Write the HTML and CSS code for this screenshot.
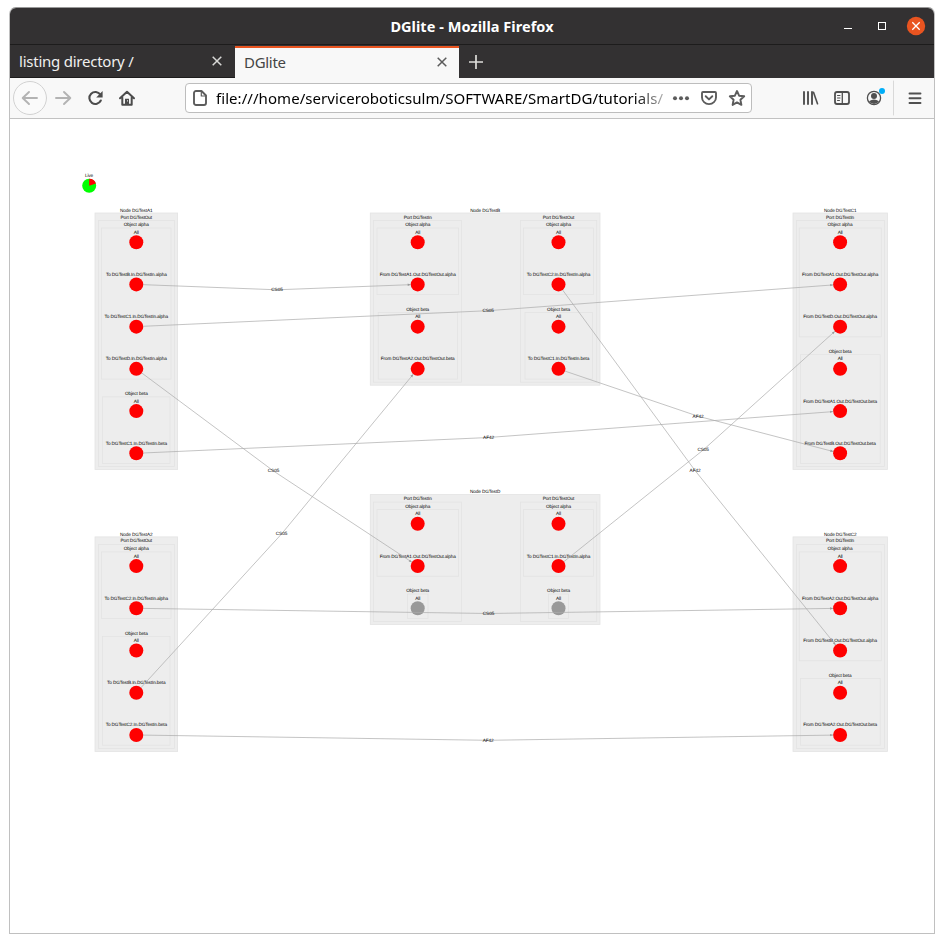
FILE: index.html
```html
<!DOCTYPE html>
<html lang="en">
<head>
<meta charset="utf-8">
<title>DGlite</title>
<link rel="stylesheet" href="styles.css">
</head>
<body>
<div class="window">
  <header class="titlebar">
    <span class="title">DGlite - Mozilla Firefox</span>
    <div class="controls">
      <svg width="82" height="20" viewBox="844 16 82 20">
        <path d="M844 28.5h8" stroke="#fff"/>
        <rect x="878.5" y="22.5" width="7" height="7" fill="none" stroke="#fff"/>
        <circle cx="916" cy="26" r="9.2" fill="#e95420"/>
        <path d="M912.3 22.3l7.4 7.4m0-7.4l-7.4 7.4" stroke="#fff" stroke-width="1.3"/>
      </svg>
    </div>
  </header>
  <nav class="tabs">
    <div class="tab"><span class="tab-one">listing directory /</span>
      <svg width="10" height="10" viewBox="0 0 10 10"><path d="M.7.7l8.6 8.6m0-8.6L.7 9.3" stroke="#d8d8d6" stroke-width="1.5"/></svg>
    </div>
    <div class="tab active"><span class="tab-two">DGlite</span>
      <svg width="10" height="10" viewBox="0 0 10 10"><path d="M.7.7l8.6 8.6m0-8.6L.7 9.3" stroke="#5b5b5b" stroke-width="1.5"/></svg>
    </div>
    <svg class="plus" width="14" height="14" viewBox="0 0 14 14"><path d="M7 0v14M0 7h14" stroke="#deddda" stroke-width="1.7"/></svg>
  </nav>
  <div class="toolbar">
    <svg class="nav-icons" width="130" height="40" viewBox="10 78 130 40" fill="none" stroke-linecap="round" stroke-linejoin="round">
      <circle cx="30" cy="98" r="16.5" fill="#fafafa" stroke="#d2d2d2"/>
      <path d="M37 98H23m6-6l-6.300 6 6.300 6" stroke="#b3b3b3" stroke-width="1.900"/>
      <path d="M56 98h14m-6-6l6.300 6-6.300 6" stroke="#b3b3b3" stroke-width="1.900"/>
      <path d="M100.300 94.500a6 6 0 1 0 .5 6" stroke="#4c4c4c" stroke-width="2.100"/>
      <path d="M102.600 91v6.400h-6.400z" fill="#4c4c4c"/>
      <path d="M120 98.300l7-6.600 7 6.600M122.300 97.500v7.200h9.400v-7.200" stroke="#4c4c4c" stroke-width="2"/>
      <path d="M125 103.900v-5.200h4v5.200z" fill="#4c4c4c"/><path d="M127.500 100.600v.5" stroke="#fff" stroke-width=".8"/>
    </svg>
    <div class="urlbar">
      <svg width="14" height="16" viewBox="0 0 14 16" fill="none" stroke="#5c5c5c" stroke-width="1.900" stroke-linejoin="round"><path d="M3 1h5.500L13 5.500V13a2 2 0 0 1-2 2H3a2 2 0 0 1-2-2V3a2 2 0 0 1 2-2z"/><path d="M8.300 1v5H13" stroke-width="1.200"/></svg>
      <span class="url">file:///home/serviceroboticsulm/SOFTWARE/SmartDG/tutorials/</span>
      <svg class="url-icons" width="74" height="18" viewBox="672 89 74 18" fill="none" stroke="#5c5c5c" stroke-width="1.900" stroke-linejoin="round" stroke-linecap="round">
        <g fill="#5c5c5c" stroke="none"><circle cx="675" cy="98.300" r="2"/><circle cx="681" cy="98.300" r="2"/><circle cx="687" cy="98.300" r="2"/></g>
        <path d="M703 92h12a1 1 0 0 1 1 1v4.500a7 6.600 0 0 1-14 0V93a1 1 0 0 1 1-1z"/><path d="M705.700 96.200l3.300 3.200 3.300-3.200"/>
        <path d="M737 91l2.100 4.700 5.100.6-3.800 3.500 1 5.100-4.400-2.500-4.400 2.500 1-5.100-3.800-3.500 5.100-.6z"/>
      </svg>
    </div>
    <svg class="menu-icons" width="130" height="40" viewBox="796 78 130 40" fill="none" stroke="#505050" stroke-width="1.800" stroke-linecap="round">
      <path d="M804 92v12M808 92v12M812 92v12" stroke-width="1.900"/><path d="M813.500 92.300l4 11.500" stroke-width="1.600"/>
      <rect x="835" y="92" width="14" height="12" rx="2"/><path d="M842.300 92v12" stroke-width="1.300"/><path d="M837.500 95.500h2.500M837.500 98h2.500M837.500 100.500h2" stroke-width="1"/>
      <circle cx="874" cy="98" r="6.600" stroke-width="1.300"/><circle cx="874" cy="96" r="3" fill="#505050" stroke="none"/><path d="M869 101.200q5-3.200 10 0-1.600 2.700-5 2.700t-5-2.700z" fill="#505050" stroke="none"/>
      <circle cx="882" cy="91" r="3" fill="#00aef8" stroke="none"/>
      <path d="M893.500 81v34" stroke="#d9d9d9" stroke-width="1"/>
      <path d="M909.500 93.500h11M909.500 98.300h11M909.500 103h11" stroke-width="1.900"/>
    </svg>
  </div>
  <main class="page">
    <svg id="graph" width="924" height="814" viewBox="10 119 924 814"></svg>
  </main>
</div>
<script src="graph.js"></script>
</body>
</html>
```
FILE: styles.css
```css
* { box-sizing: border-box; }
body {
  margin: 0;
  padding: 7px 9px;
  height: 943px;
  background: #fff;
  font-family: "Noto Sans", sans-serif;
  overflow: hidden;
}
.window {
  width: 926px;
  height: 927px;
  border: 1px solid #c0c0c0;
  border-top-color: #999;
  border-radius: 7px 7px 0 0;
  overflow: hidden;
  display: flex;
  flex-direction: column;
}
.titlebar {
  height: 37px;
  flex: none;
  display: grid;
  grid-template-columns: 1fr auto 1fr;
  align-items: center;
  background: #333132;
  border-bottom: 1px solid #1d1c1c;
  color: #fff;
}
.title {
  grid-column: 2;
  font-size: 14.500px;
  font-weight: 700;
  line-height: 20px;
  letter-spacing: 0.050px;
  white-space: nowrap;
}
.controls { justify-self: end; padding-right: 8px; height: 20px; }
svg { display: block; flex: none; }
.tabs {
  height: 33px;
  flex: none;
  display: flex;
  align-items: center;
  background: #333132;
}
.tab {
  height: 33px;
  width: 225px;
  padding: 0 13px 0 9px;
  display: flex;
  align-items: center;
  justify-content: space-between;
  color: #efefee;
  font-size: 15px;
  border-bottom: 1px solid #1d1c1c;
  white-space: nowrap;
}
.tab.active {
  width: 224px;
  margin-top: 1px;
  height: 32px;
  background: #f8f8f8;
  color: #454545;
  border-top: 2px solid #e95420;
  border-bottom: 0;
  padding: 0 12px 2px 9px;
}
.plus { margin-left: 10px; }
.tab-one { letter-spacing: -0.240px; }
.tab-two { letter-spacing: -0.300px; }
.toolbar {
  height: 41px;
  flex: none;
  display: flex;
  background: #f8f8f8;
  border-bottom: 1px solid #c2c2c2;
}
.urlbar {
  margin: 5px 44px 0 45px;
  width: 567px;
  height: 30px;
  padding: 0 5px 0 7px;
  display: flex;
  align-items: center;
  border: 1px solid #bdbdbd;
  border-radius: 4px;
  background: #fff;
}
.url {
  margin-left: 9px;
  width: 449px;
  flex: none;
  overflow: hidden;
  white-space: nowrap;
  font-size: 15px;
  letter-spacing: 0.060px;
  background: linear-gradient(90deg, #000 93%, #bbb 100%);
  background-clip: text;
  color: transparent;
}
.url-icons { margin-left: auto; }
.page { flex: 1; background: #fff; }
.box { fill: #ededed; stroke: #e3e3e3; stroke-width: .8; }
.edge { fill: none; stroke: #aaa; stroke-width: .7; }
.arrow { fill: #999; }
.on { fill: #f00; }
.off { fill: #999; }
.label {
  font-family: "Liberation Sans", sans-serif;
  font-size: 4.690px;
  letter-spacing: -0.110px;
  text-anchor: middle;
  text-rendering: geometricPrecision;
  fill: #000;
}
```
FILE: graph.js
```js
const COL = { left: 136.3, midIn: 417.7, midOut: 558.5, right: 840.1 };
const STEP = 42.22;
const parts = [];

const box = (x1, y1, x2, y2) =>
  parts.push(`<rect class="box" x="${x1}" y="${y1}" width="${x2 - x1}" height="${y2 - y1}"/>`);
const label = (x, y, text) =>
  parts.push(`<text class="label" x="${x}" y="${y + 1.5}">${text}</text>`);
const dot = (x, y, cls) =>
  parts.push(`<circle class="${cls}" cx="${x}" cy="${y}" r="7"/>`);

// objects: [name, x1, x2, first row, row labels, dot class]
function port(cx, top, bottom, x1, x2, name, objects) {
  box(x1, top + 7.5, x2, bottom - 3);
  label(cx, top + 4, 'Port ' + name);
  for (const [obj, ox1, ox2, row, rows, cls] of objects) {
    const y = top + 29.200 + row * STEP;
    box(ox1, y - 14.200, ox2, y + (rows.length - 1) * STEP + 10.200);
    label(cx, y - 17.300, 'Object ' + obj);
    rows.forEach((text, i) => {
      label(cx, y + i * STEP - 10, text);
      dot(cx, y + i * STEP, cls || 'on');
    });
  }
}

function node(name, x1, top, x2, bottom) {
  box(x1, top, x2, bottom);
  label((x1 + x2) / 2, top - 2.700, 'Node ' + name);
}

node('DGTestA1', 95, 213, 177.600, 469.500);
port(COL.left, 213, 469.500, 98.500, 174.500, 'DGTestOut', [
  ['alpha', 101.500, 171, 0, ['All', 'To DGTestB.In.DGTestIn.alpha', 'To DGTestC1.In.DGTestIn.alpha', 'To DGTestD.In.DGTestIn.alpha']],
  ['beta', 102.500, 170, 4, ['All', 'To DGTestC1.In.DGTestIn.beta']]
]);
node('DGTestB', 370.300, 213, 600, 385.200);
port(COL.midIn, 213, 385.200, 373.500, 461.500, 'DGTestIn', [
  ['alpha', 377, 458.600, 0, ['All', 'From DGTestA1.Out.DGTestOut.alpha']],
  ['beta', 378.300, 457.500, 2, ['All', 'From DGTestA2.Out.DGTestOut.beta']]
]);
port(COL.midOut, 213, 385.200, 520.500, 596.700, 'DGTestOut', [
  ['alpha', 523.600, 593.500, 0, ['All', 'To DGTestC2.In.DGTestIn.alpha']],
  ['beta', 525, 592.500, 2, ['All', 'To DGTestC1.In.DGTestIn.beta']]
]);
node('DGTestC1', 793, 213, 887.500, 469.500);
port(COL.right, 213, 469.500, 796.400, 884.500, 'DGTestIn', [
  ['alpha', 799.300, 881.300, 0, ['All', 'From DGTestA1.Out.DGTestOut.alpha', 'From DGTestD.Out.DGTestOut.alpha']],
  ['beta', 800.500, 880.200, 3, ['All', 'From DGTestA1.Out.DGTestOut.beta', 'From DGTestB.Out.DGTestOut.beta']]
]);
node('DGTestD', 370.300, 494.600, 600, 624.500);
port(COL.midIn, 494.600, 624.500, 373.500, 461.500, 'DGTestIn', [
  ['alpha', 377, 458.600, 0, ['All', 'From DGTestA1.Out.DGTestOut.alpha']],
  ['beta', 407.500, 428, 2, ['All'], 'off']
]);
port(COL.midOut, 494.600, 624.500, 520.500, 596.700, 'DGTestOut', [
  ['alpha', 523.600, 593.500, 0, ['All', 'To DGTestC1.In.DGTestIn.alpha']],
  ['beta', 548.500, 568.500, 2, ['All'], 'off']
]);
node('DGTestA2', 95, 536.900, 177.600, 751.500);
port(COL.left, 536.900, 751.500, 98.500, 174.500, 'DGTestOut', [
  ['alpha', 101.500, 171, 0, ['All', 'To DGTestC2.In.DGTestIn.alpha']],
  ['beta', 102.500, 170, 2, ['All', 'To DGTestB.In.DGTestIn.beta', 'To DGTestC2.In.DGTestIn.beta']]
]);
node('DGTestC2', 793, 536.900, 887.500, 751.500);
port(COL.right, 536.900, 751.500, 796.400, 884.500, 'DGTestIn', [
  ['alpha', 799.300, 881.300, 0, ['All', 'From DGTestA2.Out.DGTestOut.alpha', 'From DGTestB.Out.DGTestOut.alpha']],
  ['beta', 800.500, 880.200, 3, ['All', 'From DGTestA2.Out.DGTestOut.beta']]
]);

// Each edge passes through its label and stops at the rims of both dots.
function edge(x1, y1, mx, my, x2, y2, text) {
  const a = Math.atan2(my - y1, mx - x1);
  const b = Math.atan2(y2 - my, x2 - mx);
  const sx = x1 + 7 * Math.cos(a), sy = y1 + 7 * Math.sin(a);
  const ex = x2 - 7 * Math.cos(b), ey = y2 - 7 * Math.sin(b);
  parts.push(`<path class="edge" d="M${sx} ${sy}L${mx} ${my}L${ex} ${ey}"/>`);
  parts.push(`<path class="arrow" d="M0 0l-3-1.200v2.400z" transform="translate(${ex} ${ey}) rotate(${b * 180 / Math.PI})"/>`);
  label(mx, my - .2, text);
}
edge(COL.left, 284.400, 277, 289.800, COL.midIn, 284.400, 'CS05');
edge(COL.left, 326.600, 488.200, 310.700, COL.right, 284.400, 'CS05');
edge(COL.left, 368.900, 273.500, 471, COL.midIn, 566, 'CS05');
edge(COL.left, 453.300, 488.500, 437.500, COL.right, 411.100, 'AF42');
edge(COL.left, 692.800, 281.500, 534, COL.midIn, 368.900, 'CS05');
edge(COL.left, 608.300, 488.500, 613.500, COL.right, 608.300, 'CS05');
edge(COL.left, 735, 488.200, 740.300, COL.right, 735, 'AF42');
edge(COL.midOut, 284.400, 695, 470.500, COL.right, 650.500, 'AF42');
edge(COL.midOut, 368.900, 698, 416.200, COL.right, 453.300, 'AF42');
edge(COL.midOut, 566, 703.200, 450, COL.right, 326.600, 'CS05');

label(89, 175.500, 'Live');
parts.push('<circle cx="89.200" cy="185.700" r="7" fill="#0f0"/>');
parts.push('<path d="M89.200 185.700V178.700A7 7 0 0 1 95.900 183.600z" fill="#f00"/>');

document.getElementById('graph').innerHTML = parts.join('');
```
